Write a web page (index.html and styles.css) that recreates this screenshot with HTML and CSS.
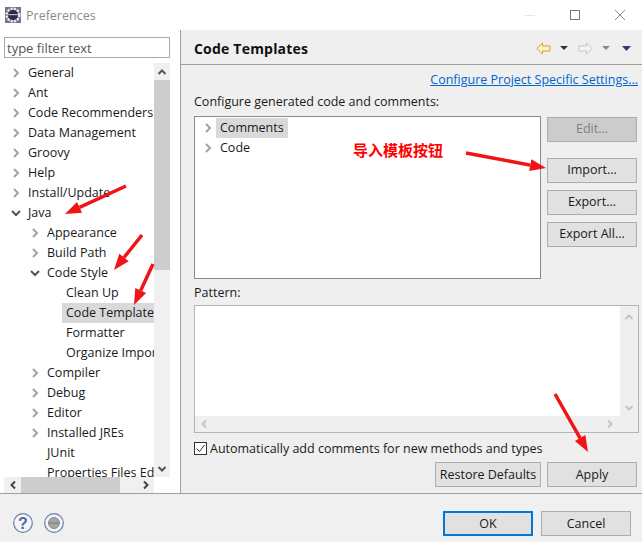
FILE: index.html
```html
<!DOCTYPE html>
<html>
  <head>
    <meta charset="utf-8" />
    <title>Preferences</title>
    <link rel="stylesheet" href="styles.css">
  </head>

  <body>
    <svg class="defs" width="0" height="0">
      <symbol id="closed" viewBox="0 0 10 10"><path d="M3 1l4 4-4 4" fill="none" stroke="#a3a3a3" stroke-width="2"/></symbol>
      <symbol id="open" viewBox="0 0 10 10"><path d="M1 3l4 4 4-4" fill="none" stroke="#555" stroke-width="2"/></symbol>
    </svg>

    <div class="window">
      <div class="titlebar">
        <svg class="app-icon" width="16" height="16" viewBox="0 0 16 16">
          <rect width="16" height="16" fill="#7d6f93"/>
          <circle cx="8" cy="8" r="6.300" fill="none" stroke="#ececec" stroke-width="2.400" stroke-dasharray="2.200 1.100"/>
          <circle cx="8" cy="8" r="5" fill="#2f2a44"/>
          <path d="M3.200 7h9.600v1.200H3.200z" fill="#bdb8c9"/>
        </svg>
        <span class="title">Preferences</span>
        <div class="win-controls">
          <svg width="10" height="10" viewBox="0 0 10 10"><path d="M0 5.500h10" stroke="#e4e4e4"/></svg>
          <svg width="10" height="10" viewBox="0 0 10 10"><rect x=".5" y=".5" width="9" height="9" fill="none" stroke="#7a7a7a"/></svg>
          <svg width="10" height="10" viewBox="0 0 10 10"><path d="M0 0l10 10M10 0L0 10" stroke="#8a8a8a"/></svg>
        </div>
      </div>

      <div class="main">
        <div class="sidebar">
          <input class="filter" type="text" placeholder="type filter text" />
          <div class="tree-view">
            <div class="tree-clip">
              <div class="row"><svg class="tw"><use href="#closed"/></svg>General</div>
              <div class="row"><svg class="tw"><use href="#closed"/></svg>Ant</div>
              <div class="row"><svg class="tw"><use href="#closed"/></svg>Code Recommenders</div>
              <div class="row"><svg class="tw"><use href="#closed"/></svg>Data Management</div>
              <div class="row"><svg class="tw"><use href="#closed"/></svg>Groovy</div>
              <div class="row"><svg class="tw"><use href="#closed"/></svg>Help</div>
              <div class="row"><svg class="tw"><use href="#closed"/></svg>Install/Update</div>
              <div class="row"><svg class="tw"><use href="#open"/></svg>Java</div>
              <div class="row lvl1"><svg class="tw"><use href="#closed"/></svg>Appearance</div>
              <div class="row lvl1"><svg class="tw"><use href="#closed"/></svg>Build Path</div>
              <div class="row lvl1"><svg class="tw"><use href="#open"/></svg>Code Style</div>
              <div class="row lvl2">Clean Up</div>
              <div class="row lvl2"><span class="selected">Code Templates</span></div>
              <div class="row lvl2">Formatter</div>
              <div class="row lvl2">Organize Imports</div>
              <div class="row lvl1"><svg class="tw"><use href="#closed"/></svg>Compiler</div>
              <div class="row lvl1"><svg class="tw"><use href="#closed"/></svg>Debug</div>
              <div class="row lvl1"><svg class="tw"><use href="#closed"/></svg>Editor</div>
              <div class="row lvl1"><svg class="tw"><use href="#closed"/></svg>Installed JREs</div>
              <div class="row lvl1 no-tw">JUnit</div>
              <div class="row lvl1 no-tw">Properties Files Editor</div>
            </div>
            <div class="vbar">
              <div class="bar-btn"><svg width="10" height="10" viewBox="0 0 10 10"><path d="M1.500 7l3.500-3.500L8.500 7" fill="none" stroke="#555" stroke-width="2"/></svg></div>
              <div class="vbar-thumb"></div>
              <div class="bar-spacer"></div>
              <div class="bar-btn"><svg width="10" height="10" viewBox="0 0 10 10"><path d="M1.500 3L5 6.500 8.500 3" fill="none" stroke="#555" stroke-width="2"/></svg></div>
            </div>
          </div>
          <div class="hbar">
            <div class="hbar-btn"><svg width="10" height="10" viewBox="0 0 10 10"><path d="M7 1.500L3.500 5 7 8.500" fill="none" stroke="#444" stroke-width="2"/></svg></div>
            <div class="hbar-thumb"></div>
            <div class="bar-spacer"></div>
            <div class="hbar-btn"><svg width="10" height="10" viewBox="0 0 10 10"><path d="M3 1.500L6.500 5 3 8.500" fill="none" stroke="#444" stroke-width="2"/></svg></div>
          </div>
        </div>

        <div class="page">
          <div class="page-head">
            <span class="page-title">Code Templates</span>
            <div class="nav">
              <svg width="15" height="13" viewBox="0 0 15 13"><path d="M.8 6.500L6.500 1v3h7.500v5H6.500v3z" fill="#fff0c4" stroke="#d2a23c"/></svg>
              <svg class="drop" width="8" height="4" viewBox="0 0 8 4"><path d="M0 0h8L4 4z" fill="#333"/></svg>
              <svg class="fwd" width="15" height="13" viewBox="0 0 15 13"><path d="M14.200 6.500L8.500 1v3H1v5h7.500v3z" fill="#f4f4f4" stroke="#c4c4c4"/></svg>
              <svg class="drop" width="8" height="4" viewBox="0 0 8 4"><path d="M0 0h8L4 4z" fill="#8a8a8a"/></svg>
              <svg class="drop-menu" width="9" height="5" viewBox="0 0 9 5"><path d="M0 0h9L4.500 5z" fill="#4b2f73"/></svg>
            </div>
          </div>

          <div class="page-body">
            <div class="link-row"><a class="link">Configure Project Specific Settings...</a></div>
            <div class="label">Configure generated code and comments:</div>

            <div class="templates">
              <div class="tpl-tree">
                <div class="tpl-row"><svg class="tw"><use href="#closed"/></svg><span class="selected">Comments</span></div>
                <div class="tpl-row"><svg class="tw"><use href="#closed"/></svg><span class="tpl-text">Code</span></div>
              </div>
              <div class="side-btns">
                <div class="btn disabled">Edit...</div>
                <div class="btn import">Import...</div>
                <div class="btn">Export...</div>
                <div class="btn">Export All...</div>
              </div>
            </div>

            <div class="label pattern-label">Pattern:</div>
            <div class="pattern">
              <div class="pattern-top">
                <div class="pattern-text"></div>
                <div class="pattern-vbar">
                  <svg width="10" height="10" viewBox="0 0 10 10"><path d="M1.500 7l3.500-3.500L8.500 7" fill="none" stroke="#c4c4c4" stroke-width="2"/></svg>
                  <svg width="10" height="10" viewBox="0 0 10 10"><path d="M1.500 3L5 6.500 8.500 3" fill="none" stroke="#c4c4c4" stroke-width="2"/></svg>
                </div>
              </div>
              <div class="pattern-hbar">
                <svg width="10" height="10" viewBox="0 0 10 10"><path d="M7 1.500L3.500 5 7 8.500" fill="none" stroke="#c4c4c4" stroke-width="2"/></svg>
                <svg width="10" height="10" viewBox="0 0 10 10"><path d="M3 1.500L6.500 5 3 8.500" fill="none" stroke="#c4c4c4" stroke-width="2"/></svg>
              </div>
            </div>

            <div class="check-row">
              <svg class="check" width="13" height="13" viewBox="0 0 13 13"><rect x=".5" y=".5" width="12" height="12" fill="#fff" stroke="#333"/><path d="M2.500 6.500l3 3 5-6.500" fill="none" stroke="#333"/></svg>
              <span>Automatically add comments for new methods and types</span>
            </div>

            <div class="page-btns">
              <div class="btn restore">Restore Defaults</div>
              <div class="btn">Apply</div>
            </div>
          </div>
        </div>
      </div>

      <div class="footer">
        <div class="footer-icons">
          <svg width="20" height="20" viewBox="0 0 20 20"><circle cx="10" cy="10" r="9.300" fill="#f4f6fa" stroke="#6580a6" stroke-width="1.200"/><text class="help-mark" x="10" y="15.500" text-anchor="middle">?</text></svg>
          <svg width="20" height="20" viewBox="0 0 20 20"><circle cx="10" cy="10" r="9.300" fill="#f4f6fa" stroke="#6580a6" stroke-width="1.200"/><circle cx="10" cy="10" r="5.500" fill="#a6a6a6" stroke="#8a8a8a"/><path d="M5 9h10v2H5z" fill="#8f8f8f"/></svg>
        </div>
        <div class="footer-btns">
          <div class="btn default">OK</div>
          <div class="btn">Cancel</div>
        </div>
      </div>

      <div class="note">导入模板按钮</div>
      <svg class="arrows" width="642" height="542" viewBox="0 0 642 542">
        <path d="M65 214L82 212.800 77 201.900z" />
        <path d="M114 270L128.700 261.300 119.300 253.700z" />
        <path d="M134 305L146.100 293 135.300 288z" />
        <path d="M546 168L529.200 171 531.400 159.200z" />
        <path d="M588 452L574.900 441 585.300 435.100z" />
        <path d="M126 186L79.500 207.300M142 235L124 257.500M153 264L140.700 290.500M466 153L530.300 165.100M555 394L580.100 438.100" class="shaft" />
      </svg>
    </div>
  </body>
</html>
```

FILE: styles.css
```css
* {
  box-sizing: border-box;
}
html,
body {
  margin: 0;
  padding: 0;
}
body {
  font-family: "Open Sans", "Noto Sans CJK SC", sans-serif;
  font-size: 12.5px;
  color: #1a1a1a;
  background: #f0f0f0;
}
.defs {
  display: block;
  height: 0;
}
.window {
  position: relative;
  width: 642px;
  height: 542px;
  display: flex;
  flex-direction: column;
  overflow: hidden;
}

/* title bar */
.titlebar {
  height: 30px;
  background: #fff;
  display: flex;
  align-items: center;
  padding-left: 5px;
  flex: none;
}
.app-icon {
  margin-right: 5px;
}
.title {
  color: #8b8b8b;
}
.win-controls {
  margin-left: auto;
  display: flex;
  gap: 35px;
  padding-right: 17px;
}

/* main area */
.main {
  height: 464px;
  display: flex;
  flex: none;
  border-bottom: 1px solid #a0a0a0;
}
.sidebar {
  width: 181px;
  flex: none;
  background: #fff;
  border-right: 1px solid #a0a0a0;
  padding: 7px 10px 0 4px;
}
.filter {
  display: block;
  width: 166px;
  height: 21px;
  border: 1px solid #a9a9a9;
  padding: 0 2px;
  font: inherit;
  font-size: 13px;
  outline: none;
}
.filter::placeholder {
  color: #555;
  opacity: 1;
}
.tree-view {
  display: flex;
  height: 414px;
  margin-top: 5px;
}
.tree-clip {
  width: 150px;
  overflow: hidden;
  flex: none;
}
.row {
  height: 20px;
  line-height: 20px;
  white-space: nowrap;
  padding-left: 7px;
  display: flex;
  align-items: center;
}
.tw {
  width: 10px;
  height: 10px;
  margin-right: 7px;
  flex: none;
}
.lvl1 {
  padding-left: 26px;
}
.lvl2 {
  padding-left: 62px;
}
.no-tw {
  padding-left: 43px;
}
.selected {
  background: #d9d9d9;
  padding: 0 4px;
  display: inline-block;
  height: 20px;
  line-height: 20px;
}
.lvl2 .selected {
  margin-left: -4px;
  flex: 1;
}
.vbar {
  width: 16px;
  flex: none;
  background: #f0f0f0;
  display: flex;
  flex-direction: column;
}
.bar-btn {
  height: 17px;
  display: flex;
  align-items: center;
  justify-content: center;
  flex: none;
}
.vbar-thumb {
  height: 190px;
  background: #cdcdcd;
  flex: none;
}
.bar-spacer {
  flex: 1;
}
.hbar {
  display: flex;
  height: 16px;
  width: 150px;
  background: #f0f0f0;
}
.hbar-btn {
  width: 17px;
  display: flex;
  align-items: center;
  justify-content: center;
  flex: none;
}
.hbar-thumb {
  width: 99px;
  background: #cdcdcd;
  flex: none;
}

/* right side */
.page {
  flex: 1;
  background: #efefef;
  display: flex;
  flex-direction: column;
}
.page-head {
  height: 35px;
  border-bottom: 1px solid #a0a0a0;
  display: flex;
  align-items: center;
  padding: 2px 12px 0 13px;
  flex: none;
}
.page-title {
  font-size: 14px;
  font-weight: 700;
  letter-spacing: .2px;
  color: #111;
}
.nav {
  margin-left: auto;
  display: flex;
  align-items: center;
}
.drop {
  margin-left: 9px;
}
.fwd {
  margin-left: 10px;
}
.drop-menu {
  margin-left: 12px;
}
.page-body {
  padding: 6px 4px 0 13px;
  display: flex;
  flex-direction: column;
}
.link-row {
  text-align: right;
  height: 18px;
  line-height: 18px;
  padding-right: 1px;
}
.link {
  color: #0066cc;
  text-decoration: underline;
}
.label {
  height: 18px;
  line-height: 18px;
  margin-top: 4px;
}
.templates {
  display: flex;
  margin-top: 5px;
}
.tpl-tree {
  width: 347px;
  height: 163px;
  background: #fff;
  border: 1px solid #8a8a8a;
  padding: 1px 0 0 8px;
  flex: none;
}
.tpl-row {
  height: 20px;
  display: flex;
  align-items: center;
}
.tpl-row .tw {
  margin-right: 3px;
}
.tpl-text {
  padding: 0 4px;
  height: 20px;
  line-height: 19px;
}
.tpl-row .selected {
  line-height: 19px;
}
.side-btns {
  margin-left: 6px;
  padding-top: 1px;
  display: flex;
  flex-direction: column;
  gap: 7px;
}
.btn {
  width: 90px;
  height: 25px;
  line-height: 23px;
  text-align: center;
  background: #e1e1e1;
  border: 1px solid #adadad;
  color: #1a1a1a;
}
.side-btns .btn {
  line-height: 21px;
}
.disabled {
  background: #cccccc;
  color: #808080;
  margin-bottom: 9px;
}
.pattern-label {
  margin-top: 5px;
}
.pattern {
  width: 445px;
  height: 128px;
  margin-top: 3px;
  border: 1px solid #b4b4b4;
  display: flex;
  flex-direction: column;
}
.pattern-top {
  height: 110px;
  display: flex;
}
.pattern-text {
  flex: 1;
  background: #fff;
}
.pattern-vbar {
  width: 18px;
  display: flex;
  flex-direction: column;
  justify-content: space-between;
  align-items: center;
  padding: 6px 0 3px;
}
.pattern-hbar {
  height: 16px;
  display: flex;
  justify-content: space-between;
  align-items: center;
  padding: 0 23px 0 4px;
}
.check-row {
  display: flex;
  align-items: center;
  height: 18px;
  margin-top: 6px;
  gap: 3px;
}
.page-btns {
  display: flex;
  justify-content: flex-end;
  gap: 6px;
  margin-top: 5px;
  padding-right: 2px;
}
.restore {
  width: 106px;
}

/* footer */
.footer {
  flex: 1;
  display: flex;
  align-items: flex-start;
  padding: 17px 11px 0 13px;
}
.footer-icons {
  display: flex;
  gap: 11px;
  padding-top: 2px;
}
.help-mark {
  font-family: "Liberation Sans", sans-serif;
  font-size: 16px;
  font-weight: bold;
  fill: #4d6a96;
}
.footer-btns {
  margin-left: auto;
  display: flex;
  gap: 8px;
}
.default {
  border: 2px solid #0078d7;
  line-height: 21px;
}

/* annotations on top of the dialog */
.note {
  position: absolute;
  left: 353px;
  top: 140px;
  font-size: 15px;
  line-height: 20px;
  font-weight: bold;
  color: #f00;
  white-space: nowrap;
}
.arrows {
  position: absolute;
  left: 0;
  top: 0;
  pointer-events: none;
}
.arrows path {
  fill: #f01414;
}
.arrows .shaft {
  fill: none;
  stroke: #f01414;
  stroke-width: 3.500;
}
```
